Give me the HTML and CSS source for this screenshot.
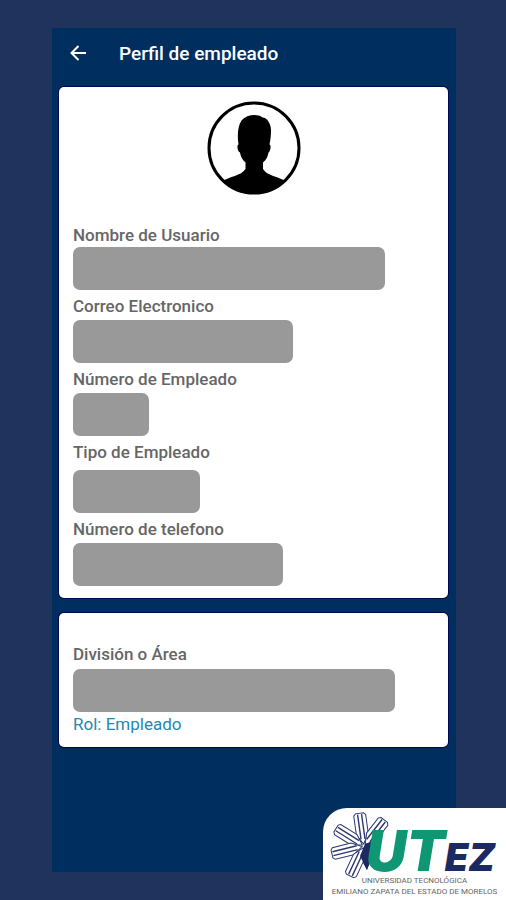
FILE: index.html
```html
<!DOCTYPE html>
<html lang="es">
<head>
    <meta charset="UTF-8">
    <meta name="viewport" content="width=device-width, initial-scale=1.0">
    <title>Perfil de empleado</title>
    <link rel="stylesheet" href="styles.css">
</head>
<body>
    <div class="screen">
        <header class="topbar">
            <button type="button" class="back-button" aria-label="Regresar">
                <svg width="18" height="18" viewBox="0 0 18 18" fill="none" stroke="currentColor" stroke-width="2">
                    <path d="M17 9H3M9.500 2L2.500 9l7 7"/>
                </svg>
            </button>
            <h1>Perfil de empleado</h1>
        </header>

        <main>
            <section class="card">
                <svg class="avatar" viewBox="0 0 94 94" role="img" aria-label="Foto de perfil">
                    <defs>
                        <clipPath id="avatar-clip"><circle cx="47" cy="47" r="45"/></clipPath>
                    </defs>
                    <circle cx="47" cy="47" r="45" fill="#fff" stroke="#000" stroke-width="3"/>
                    <path clip-path="url(#avatar-clip)" d="M38.500 68V61.500C35 58.500 33.500 55 33 51.500C30.500 50.500 29.500 44 31.500 43.500C30 33 31 25 34.500 19.500C40 13.500 50 12.500 55.500 16.500C60 16.500 64 23 64 29C64 34 63.500 39 62.500 43.500C64.500 44 63.500 50.500 61.500 51.500C61 55 59.500 58.500 56 61.500V68C60 75 71 75 80 81V95H14V81C23 75 34 75 38.500 68Z"/>
                </svg>

                <div class="field tight">
                    <label for="nombre">Nombre de Usuario</label>
                    <input type="text" id="nombre" class="w-name" readonly>
                </div>
                <div class="field">
                    <label for="correo">Correo Electronico</label>
                    <input type="text" id="correo" class="w-mail" readonly>
                </div>
                <div class="field">
                    <label for="numero">Número de Empleado</label>
                    <input type="text" id="numero" class="w-number" readonly>
                </div>
                <div class="field loose">
                    <label for="tipo">Tipo de Empleado</label>
                    <input type="text" id="tipo" class="w-type" readonly>
                </div>
                <div class="field">
                    <label for="telefono">Número de telefono</label>
                    <input type="text" id="telefono" class="w-phone" readonly>
                </div>
            </section>

            <section class="card card-area">
                <div class="field">
                    <label for="area">División o Área</label>
                    <input type="text" id="area" class="w-area" readonly>
                </div>
                <p class="role">Rol: Empleado</p>
            </section>
        </main>
    </div>

    <footer class="brand">
        <svg class="brand-logo" viewBox="0 0 183 66" role="img" aria-label="UTEZ">
            <defs>
                <g id="ray">
                    <path d="M-6 -12V-31L-4 -33H4L6 -31V-12L0 -2Z" fill="#fff" stroke="#2b3770" stroke-width="1"/>
                    <path d="M-2 -7V-32M2 -7V-32" stroke="#2b3770" stroke-width="1.400"/>
                </g>
            </defs>
            <path d="M54 20L60 22L44 62L36 47Z" fill="#1b2a63"/>
            <use href="#ray" transform="translate(41 38) rotate(-8)"/>
            <use href="#ray" transform="translate(41 38) rotate(38)"/>
            <use href="#ray" transform="translate(41 38) rotate(-58)"/>
            <use href="#ray" transform="translate(41 38) rotate(-104)"/>
            <use href="#ray" transform="translate(41 38) rotate(-155)"/>
            <path d="M42 36L52 33L44 62L37 48Z" fill="#1b2a63"/>
            <text class="logo-text" x="43" y="63">UT<tspan class="logo-ez">EZ</tspan></text>
        </svg>
        <p>UNIVERSIDAD TECNOLÓGICA</p>
        <p>EMILIANO ZAPATA DEL ESTADO DE MORELOS</p>
    </footer>
</body>
</html>
```
FILE: styles.css
```css
/* Basic styling */
* {
    margin: 0;
    padding: 0;
    box-sizing: border-box;
}

body {
    background-color: #20335c;
    font-family: Roboto, "Liberation Sans", sans-serif;
    min-height: 100vh;
    padding: 28px 50px 28px 52px;
}

.screen {
    background-color: #002f5f;
    min-height: calc(100vh - 56px);
    padding: 0 8px 16px 7px;
}

/* Top bar */
.topbar {
    display: flex;
    align-items: center;
    gap: 32px;
    height: 50px;
    padding-left: 10px;
    margin-bottom: 9px;
    color: #fff;
}

.back-button {
    display: flex;
    background: none;
    border: none;
    color: inherit;
    cursor: pointer;
}

h1 {
    font-size: 19px;
    font-weight: 500;
}

/* Cards */
.card {
    display: flex;
    flex-direction: column;
    gap: 6px;
    background-color: #fff;
    border-radius: 5px;
    box-shadow: 0 0 0 1px #00084f;
    padding: 14px 14px 12px;
    margin-bottom: 15px;
}

.card-area {
    gap: 2px;
    padding-top: 31px;
    padding-bottom: 13px;
}

.card-area .field {
    gap: 5px;
}

.avatar {
    width: 94px;
    align-self: center;
    margin-bottom: 24px;
}

/* Profile fields */
.field {
    display: flex;
    flex-direction: column;
    align-items: flex-start;
    gap: 4px;
}

.field.tight {
    gap: 2px;
}

.field.loose {
    gap: 8px;
}

label {
    color: #666;
    font-size: 17px;
    font-weight: 500;
    line-height: 20px;
}

input {
    height: 43px;
    max-width: 100%;
    background-color: #999;
    border: none;
    border-radius: 7px;
    padding: 0 12px;
}

.w-name {
    width: 312px;
}

.w-mail {
    width: 220px;
}

.w-number {
    width: 76px;
}

.w-type {
    width: 127px;
}

.w-phone {
    width: 210px;
}

.w-area {
    width: 322px;
}

.role {
    color: #2389b0;
    font-size: 17px;
    line-height: 20px;
}

/* University badge */
.brand {
    position: fixed;
    right: 0;
    bottom: 0;
    width: 183px;
    background-color: #fff;
    border-top-left-radius: 24px;
    padding-bottom: 3px;
    color: #666;
    font-size: 8px;
    line-height: 11px;
    text-align: center;
}

.brand p {
    white-space: nowrap;
}

.brand-logo {
    display: block;
    width: 100%;
    margin-bottom: 1px;
    overflow: visible;
}

.logo-text {
    fill: #0f9672;
    font-family: Inter, "Liberation Sans", sans-serif;
    font-size: 56px;
    font-style: italic;
    font-weight: 900;
}

.logo-ez {
    fill: #1b2a63;
    font-size: 38px;
}
```
